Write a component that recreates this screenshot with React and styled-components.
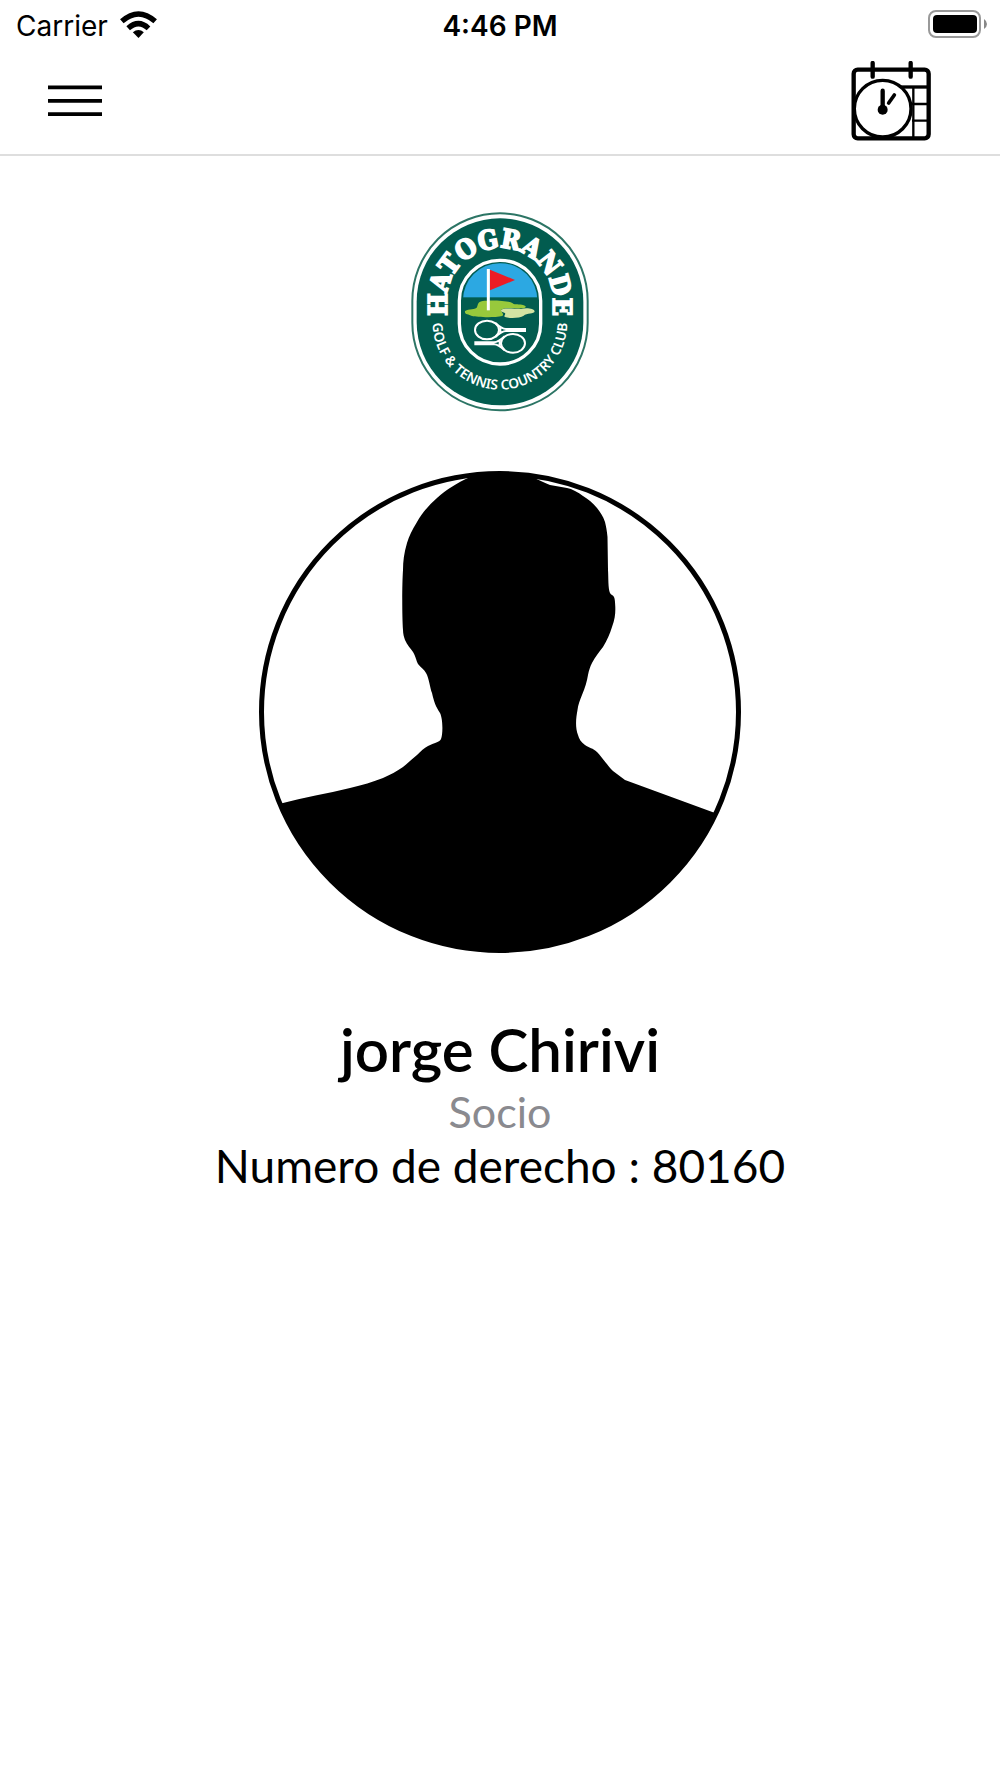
import React from 'react'
import styled, { createGlobalStyle } from 'styled-components'

const GlobalStyle=createGlobalStyle`
*{
box-sizing:border-box;
}
body{
margin:0;
background-color:#fff;
color:#000;
font-family:Lato, sans-serif;
}
`

const Container=styled.div`
display:flex;
flex-direction:column;
min-height:100vh;
`

const StatusBar=styled.div`
display:grid;
grid-template-columns:1fr auto 1fr;
align-items:center;
height:48px;
padding:0 12px;
font-family:Inter, sans-serif;
font-size:28px;
line-height:32px;
`

const Network=styled.div`
display:flex;
align-items:center;
gap:12px;
padding-left:4px;
`

const CarrierName=styled.span`
padding-top:4px;
`

const Time=styled.time`
padding-top:4px;
font-weight:600;
`

const Battery=styled.svg`
justify-self:end;
`

const Navbar=styled.header`
display:flex;
align-items:flex-start;
justify-content:space-between;
height:108px;
padding:12px 69px 0 48px;
border-bottom:2px solid #dedede;
`

const IconButton=styled.button`
display:flex;
align-items:center;
height:82px;
padding:0;
border:none;
background:none;
color:inherit;
cursor:pointer;
`

const Profile=styled.main`
display:flex;
flex-direction:column;
align-items:center;
padding-top:55px;
`

const Logo=styled.svg`
width:180px;
height:202px;
`

const Avatar=styled.svg`
width:482px;
height:482px;
margin-top:58px;
`

const Name=styled.h1`
margin:60px 0 0;
font-size:60px;
font-weight:600;
line-height:72px;
`

const Detail=styled.p`
margin:0;
font-size:${({$size})=>$size}px;
line-height:54px;
color:${({$soft})=>$soft ? '#8a8a8f' : 'inherit'};
`

const WifiIcon = () => (
  <svg width="37" height="27" viewBox="361 30 110 81" aria-hidden="true">
    <g fill="none" stroke="#000" strokeWidth="16">
      <path d="M366 61 Q416 17 466 61"/>
      <path d="M385 82 Q416 54 446 82"/>
    </g>
    <path d="M399 94 Q416 80 432 94 L416 111 Z"/>
  </svg>
)

const BatteryIcon = () => (
  <Battery width="60" height="28" viewBox="0 0 60 28" role="img" aria-label="Battery full">
    <rect x="1" y="1" width="51" height="26" rx="7" fill="#fff" stroke="#999" strokeWidth="2"/>
    <rect x="5" y="5" width="44" height="18" rx="4"/>
    <path d="M56 9 Q59 11 59 14 Q59 17 56 19 Z" fill="#888"/>
  </Battery>
)

const MenuIcon = () => (
  <svg width="54" height="32" viewBox="0 0 54 32" aria-hidden="true">
    <path d="M0 2.3H54M0 15.8H54M0 29.2H54" stroke="#000" strokeWidth="3.8"/>
  </svg>
)

const BookingIcon = () => (
  <svg width="80" height="80" viewBox="93 182 240 240" fill="none" stroke="#000" aria-hidden="true">
    <rect x="101" y="208" width="225" height="206" rx="12" strokeWidth="13"/>
    <path d="M158 188V229M272 188V229" strokeWidth="13" strokeLinecap="round"/>
    <path d="M236 260H324" strokeWidth="10"/>
    <path d="M280 262V412M276 311H324M276 361H324" strokeWidth="7"/>
    <circle cx="188" cy="325" r="85" fill="#fff" strokeWidth="10"/>
    <path d="M188 271V326" strokeWidth="13" strokeLinecap="round"/>
    <path d="M223 284L206 308" strokeWidth="11" strokeLinecap="round"/>
    <circle cx="188" cy="328" r="15" fill="#000" stroke="none"/>
  </svg>
)

const ClubLogo = () => (
  <Logo viewBox="30 32 540 606" role="img" aria-label="Hatogrande Golf & Tennis Country Club">
    <defs>
      <path id="top-arc" d="M140 341V303A160 160 0 0 1 460 303V341"/>
      <path id="bottom-arc" d="M98 350V366A202 202 0 0 0 502 366V350"/>
      <clipPath id="badge">
        <rect x="189" y="189" width="223" height="293" rx="110"/>
      </clipPath>
    </defs>
    <rect x="37" y="39" width="526" height="591" rx="263" fill="#fff" stroke="#2c7565" strokeWidth="6"/>
    <rect x="50" y="54" width="500" height="561" rx="250" fill="#025c4f"/>
    <rect x="178" y="180" width="244" height="311" rx="121" fill="#025c4f" stroke="#fff" strokeWidth="10"/>
    <g clipPath="url(#badge)">
      <rect x="187" y="187" width="227" height="104" fill="#2ca8e2"/>
    </g>
    <path d="M195 333C197 326 221 329 230 322C236 312 231 305 248 302C275 298 329 302 337 308C341 314 352 311 366 313C383 317 378 323 369 324C348 326 314 320 304 328C302 336 314 340 307 347C279 353 230 350 216 347C205 341 193 343 195 333Z" fill="#98c93c"/>
    <path d="M304 329C310 322 340 326 363 326C379 321 403 325 404 333C403 342 380 338 371 346C360 354 326 354 315 350C309 347 321 341 313 337C306 335 300 333 304 329Z" fill="#d5e4a3"/>
    <path d="M270 208L345 239L270 270Z" fill="#ec1c24"/>
    <path d="M265 206V330" stroke="#fff" strokeWidth="9"/>
    <g fill="none" stroke="#fff" strokeWidth="6">
      <ellipse cx="261" cy="389" rx="36" ry="28"/>
      <path d="M286 368C298 379 306 386 318 386H375V392H318C306 392 298 399 286 410M301 379V400"/>
      <ellipse cx="339" cy="429" rx="36" ry="28"/>
      <path d="M314 408C302 419 294 426 282 426H226V432H282C294 432 302 439 314 450M299 419V440"/>
    </g>
    <text fill="#fff" stroke="#fff" strokeWidth="5" fontFamily="'DejaVu Serif Condensed', 'DejaVu Serif', serif" fontWeight="700" fontSize="79" textAnchor="middle">
      <textPath href="#top-arc" startOffset="50%">HATOGRANDE</textPath>
    </text>
    <text fill="#fff" fontFamily="'Noto Sans', sans-serif" fontWeight="600" fontSize="41" textAnchor="middle">
      <textPath href="#bottom-arc" startOffset="50%">GOLF &amp; TENNIS COUNTRY CLUB</textPath>
    </text>
  </Logo>
)

const Silhouette = () => (
  <Avatar viewBox="259 471 482 482" role="img" aria-label="Foto de perfil">
    <clipPath id="frame">
      <circle cx="500" cy="712" r="240"/>
    </clipPath>
    <path
      clipPath="url(#frame)"
      d="M470 477C457 483 447 489 437 498C429 505 422 513 417 522C412 530 409 536 407 543C404 553 403 561 403 570C402 585 402 615 403 630C403 634 404 637 405 640C407 645 411 649 413 652C416 657 416 660 418 664C421 668 424 669 426 673C429 678 430 688 432 693C434 702 436 707 440 713C443 719 443 734 441 739C440 742 434 743 428 746C424 748 421 751 417 755C412 759 408 763 403 767C397 771 390 775 383 778C373 782 362 785 350 788C327 794 304 797 281 803.500L259 960H741L715 813L625 780C621 777 617 774 613 771C607 765 601 756 597 752C593 748 589 748 585 745C581 742 579 739 578 735C575 727 576 718 577.500 710C578 705 580 700 582 695C585 688 587 681 588 675C589 670 590 667 592 663C595 657 600 651 603 647C607 640 610 634 612 627C615 619 615.500 613 615.300 607C615 602 615 599 614 597C613 595 611 595 610 593C608 588 608.500 578 608 570L607.500 537C607 531 606 526 605 522C603 516 600 512 597 508C593 503 588 499 583 496C578 492 572 489 567 488L550 485C545 483 541 481 536.500 479L536 465H470Z"
    />
    <circle cx="500" cy="712" r="238.500" fill="none" stroke="#000" strokeWidth="5"/>
  </Avatar>
)

const App = () => {
  return (
    <Container>
      <GlobalStyle/>
      <StatusBar>
        <Network>
          <CarrierName>Carrier</CarrierName>
          <WifiIcon/>
        </Network>
        <Time>4:46 PM</Time>
        <BatteryIcon/>
      </StatusBar>
      <Navbar>
        <IconButton type="button" aria-label="Menu">
          <MenuIcon/>
        </IconButton>
        <IconButton type="button" aria-label="Reservas">
          <BookingIcon/>
        </IconButton>
      </Navbar>
      <Profile>
        <ClubLogo/>
        <Silhouette/>
        <Name>jorge Chirivi</Name>
        <Detail $size={43} $soft>Socio</Detail>
        <Detail $size={46}>Numero de derecho : 80160</Detail>
      </Profile>
    </Container>
  )
}

export default App
